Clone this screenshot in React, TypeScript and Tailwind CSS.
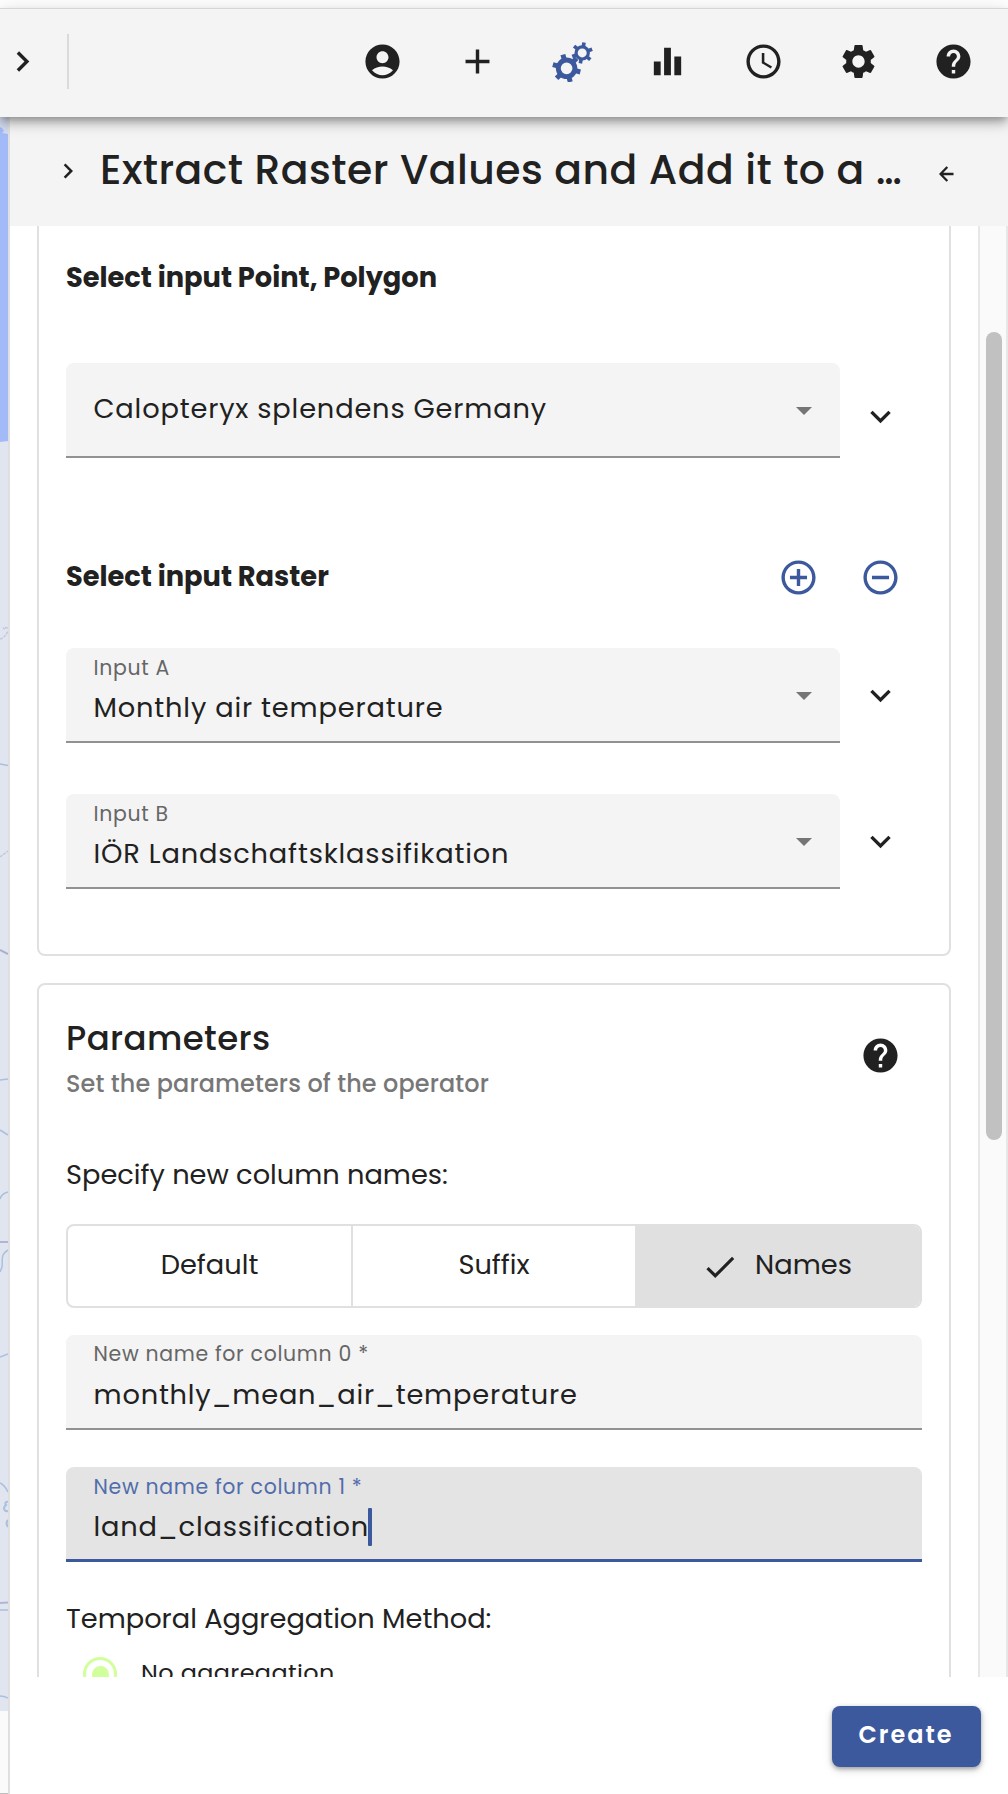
import type { ReactNode } from 'react'
import {
  MdAccountCircle,
  MdAdd,
  MdAddCircleOutline,
  MdCheck,
  MdChevronRight,
  MdEqualizer,
  MdExpandMore,
  MdHelp,
  MdRemoveCircleOutline,
  MdSchedule,
  MdSettings,
} from 'react-icons/md'

const BIG_TEETH = [15, 75, 135, 195, 255, 315]
const SMALL_TEETH = [-80, -20, 40, 100, 160, 220]

function Gear({ cx, cy, ring, width, tip, tooth, angles }: {
  cx: number; cy: number; ring: number; width: number; tip: number; tooth: number; angles: number[]
}) {
  return (
    <g transform={`translate(${cx} ${cy})`} stroke="#3c599e" fill="none">
      <circle r={ring} strokeWidth={width} />
      {angles.map((a) => (
        <line key={a} x1={ring} x2={tip} y1={0} y2={0} strokeWidth={tooth} transform={`rotate(${a})`} />
      ))}
    </g>
  )
}

function Gears() {
  return (
    <svg viewBox="0 0 41 41" className="size-[41px]">
      <Gear cx={14.6} cy={27.3} ring={8.3} width={4.9} tip={14.2} tooth={5} angles={BIG_TEETH} />
      <Gear cx={30.2} cy={11.9} ring={6.1} width={3.2} tip={10.6} tooth={3.6} angles={SMALL_TEETH} />
    </svg>
  )
}

function Toolbar() {
  return (
    <header className="relative z-10 flex h-[109px] shrink-0 items-center border-t border-[#d6d6d6] bg-[#f4f4f4] pb-1 shadow-[0_4px_8px_-2px_rgba(0,0,0,0.3),0_8px_10px_0_rgba(0,0,0,0.14),0_2px_20px_0_rgba(0,0,0,0.12)]">
      <MdChevronRight className="ml-[2px] size-[41px]" />
      <div className="ml-6 h-[55px] w-[2px] bg-[#dadada]" />
      <nav className="mr-[34px] ml-auto flex gap-[54.2px]">
        <MdAccountCircle className="size-[41px]" />
        <MdAdd className="size-[41px]" />
        <Gears />
        <MdEqualizer className="size-[41px]" />
        <MdSchedule className="size-[41px]" />
        <MdSettings className="size-[41px]" />
        <MdHelp className="size-[41px]" />
      </nav>
    </header>
  )
}

function MapStrip() {
  return (
    <div className="flex w-2 shrink-0 flex-col bg-[#e0e5ef]">
      <svg viewBox="0 117 8 1594" className="h-[1594px] w-2" fill="none" stroke="#a9c0de" strokeWidth="1.5">
        <rect x="0" y="117" width="8" height="17" fill="#d3dbef" stroke="none" />
        <path d="M0 127l2 1 2 3-2 2 6 1v307l-8 1z" fill="#a3baf9" stroke="none" />
        <path d="M8 628c-4-1-6 0-3 1M0 639c4-1 6-4 8-8" stroke="#c3c8e0" strokeDasharray="3 1" />
        <path d="M0 764l8 1.5" />
        <path d="M0 857l8-6" stroke="#c3c8e0" strokeDasharray="3 1" />
        <path d="M0 950l8 4" stroke="#a9afcf" strokeWidth="2" />
        <path d="M0 1080l8-1M0 1130l8 5M0 1199c1-4 4-6 8-7" />
        <path d="M0 1242h8" stroke="#b3b6d2" strokeWidth="2" />
        <path d="M8 1250c-8 5-5 9-6 17l-2 5M0 1357l8-3M0 1483c4 2 6 5 8 9" />
        <path d="M8 1502c-3-1-3 2-2 3-4 3-1 7 2 6M8 1520c-2 2-2 4 0 7" strokeWidth="2" />
        <path d="M0 1603l8-.5" stroke="#b3b6d2" strokeWidth="2" />
        <path d="M0 1610h8M0 1696c3 0 6 1 8 2" />
      </svg>
      <div className="flex-1 border-b border-[#bdbdbd] bg-[#fafafa]" />
    </div>
  )
}

function Triangle() {
  return (
    <svg viewBox="0 0 16 8" className="mt-[2px] h-2 w-4" fill="#757575">
      <path d="M0 0h16L8 8z" />
    </svg>
  )
}

function BackArrow() {
  return (
    <svg viewBox="0 0 15 16" className="mt-[7px] ml-[29px] h-4 w-[15px]" fill="none" stroke="currentColor" strokeWidth="2.3">
      <path d="M14.5 8H1.8M8.3 1L1.5 8l6.8 7" />
    </svg>
  )
}

function Select({ label, children }: { label?: string; children: ReactNode }) {
  return (
    <div className="flex h-[95px] w-[774px] items-center justify-between rounded-t-lg border-b-2 border-[#929292] bg-[#f4f4f4] pr-7 pl-[27.5px]">
      <div className={label ? 'self-start pt-[8px]' : 'self-start pt-[28px]'}>
        {label && <div className="mb-[10px] text-[20.45px] leading-6 tracking-[0.68px] text-[#666]">{label}</div>}
        <div className="text-[27.25px] leading-9 tracking-[0.83px] whitespace-nowrap">{children}</div>
      </div>
      <Triangle />
    </div>
  )
}

function Chevron() {
  return <MdExpandMore className="mr-[21px] size-[41px]" />
}

function InputCard() {
  return (
    <section className="h-[730px] shrink-0 rounded-b-lg border-2 border-t-0 border-[#e0e0e0] px-[27px] pt-[32px]">
      <h3 className="text-[27.25px] leading-10 font-bold">Select input Point, Polygon</h3>
      <div className="mt-[65px] flex items-center justify-between">
        <Select>Calopteryx splendens Germany</Select>
        <div className="pt-[12px]">
          <Chevron />
        </div>
      </div>
      <div className="mt-[99px] flex h-10 items-center">
        <h3 className="text-[27.25px] leading-10 font-bold">Select input Raster</h3>
        <div className="mr-[21px] ml-auto flex gap-[41px] pt-[1px] text-[#3c599e]">
          <MdAddCircleOutline className="size-[41px]" />
          <MdRemoveCircleOutline className="size-[41px]" />
        </div>
      </div>
      <div className="mt-[51px] flex items-center justify-between">
        <Select label="Input A">Monthly air temperature</Select>
        <Chevron />
      </div>
      <div className="mt-[51px] flex items-center justify-between">
        <Select label="Input B">IÖR Landschaftsklassifikation</Select>
        <Chevron />
      </div>
    </section>
  )
}

function ParametersCard() {
  return (
    <section className="mt-[27px] h-[900px] shrink-0 rounded-t-lg border-2 border-[#e0e0e0] px-[27px] pt-[33px]">
      <div className="flex items-start justify-between">
        <div>
          <h2 className="text-[34px] leading-10 font-medium tracking-[0.4px]">Parameters</h2>
          <p className="mt-[10px] text-[23.9px] leading-8 font-medium tracking-[0.14px] text-[#777]">
            Set the parameters of the operator
          </p>
        </div>
        <MdHelp className="mt-[17px] mr-[21px] size-[41px]" />
      </div>
      <p className="mt-[55px] text-[27.25px] leading-10">Specify new column names:</p>
      <div className="mt-[29px] flex h-[84px] overflow-hidden rounded-lg border-2 border-[#e0e0e0] text-[27.25px]">
        <div className="flex w-[285px] items-center justify-center border-r-2 border-[#e0e0e0] pb-[2px]">Default</div>
        <div className="flex w-[282px] items-center justify-center pb-[2px]">Suffix</div>
        <div className="flex flex-1 items-center justify-center gap-[16px] bg-[#e0e0e0] pr-[2px] pb-[2px]">
          <MdCheck className="mt-[3px] size-[38px]" />
          Names
        </div>
      </div>
      <div className="mt-[27px] h-[95px] rounded-t-lg border-b-2 border-[#929292] bg-[#f4f4f4] px-[27.5px] pt-[7px]">
        <div className="text-[20.45px] leading-6 tracking-[0.68px] text-[#666]">New name for column 0 *</div>
        <div className="mt-[11px] text-[27.25px] leading-9 tracking-[0.81px]">monthly_mean_air_temperature</div>
      </div>
      <div className="mt-[37px] h-[95px] rounded-t-lg border-b-3 border-[#3c599e] bg-[#e4e4e4] px-[27.5px] pt-[8px]">
        <div className="text-[20.45px] leading-6 tracking-[0.68px] text-[#526dab]">New name for column 1 *</div>
        <div className="mt-[10px] flex text-[27.25px] leading-9 tracking-[0.82px]">
          land_classification
          <span className="-mt-[1px] -ml-[1px] h-[38px] w-1 rounded-[1px] bg-[#3c599e]" />
        </div>
      </div>
      <p className="mt-[37px] text-[27.25px] leading-10">Temporal Aggregation Method:</p>
      <div className="mt-[15px] flex h-10 items-center gap-[24px] pl-[17px]">
        <span className="flex size-[34px] items-center justify-center rounded-full border-3 border-[#d0ff9b]">
          <span className="size-[17px] rounded-full bg-[#d0ff9b]" />
        </span>
        <span className="-mt-[2px] text-[23.9px] leading-10 tracking-[0.4px]">No aggregation</span>
      </div>
    </section>
  )
}

export default function App() {
  return (
    <div className="flex h-[1794px] w-[1008px] flex-col overflow-hidden bg-white pt-2 font-[Poppins,Inter,sans-serif] text-[#212121]">
      <Toolbar />
      <div className="flex min-h-0 flex-1">
        <MapStrip />
        <aside className="flex min-w-0 flex-1 flex-col border-l-2 border-[#dfdfdf]">
          <div className="flex h-[109px] shrink-0 items-center bg-[#f4f4f4] pb-[2px]">
            <MdChevronRight className="ml-[43px] size-[30px]" />
            <h1 className="-mt-[2px] ml-[17px] w-[810px] text-[40.9px] leading-[48px] font-medium tracking-[0.46px] whitespace-nowrap">
              Extract Raster Values and Add it to a …
            </h1>
            <BackArrow />
          </div>
          <div className="flex min-h-0 flex-1">
            <div className="flex flex-1 flex-col overflow-hidden px-[27px]">
              <InputCard />
              <ParametersCard />
            </div>
            <div className="w-[30px] border-x-2 border-[#e7e7e7] bg-[#fafafa] pt-[106px] pr-1 pl-[6px]">
              <div className="h-[808px] w-4 rounded-full bg-[#c1c1c1]" />
            </div>
          </div>
          <footer className="flex h-[117px] shrink-0 items-start justify-end pt-[29px] pr-[27px]">
            <button className="h-[61px] w-[149px] rounded-lg bg-[#3c599e] px-0 pr-[1px] pb-[4px] text-[23.9px] font-semibold tracking-[2.05px] text-white shadow-[0_2px_4px_rgba(0,0,0,0.3),0_3px_10px_rgba(0,0,0,0.14)]">
              Create
            </button>
          </footer>
        </aside>
      </div>
    </div>
  )
}
